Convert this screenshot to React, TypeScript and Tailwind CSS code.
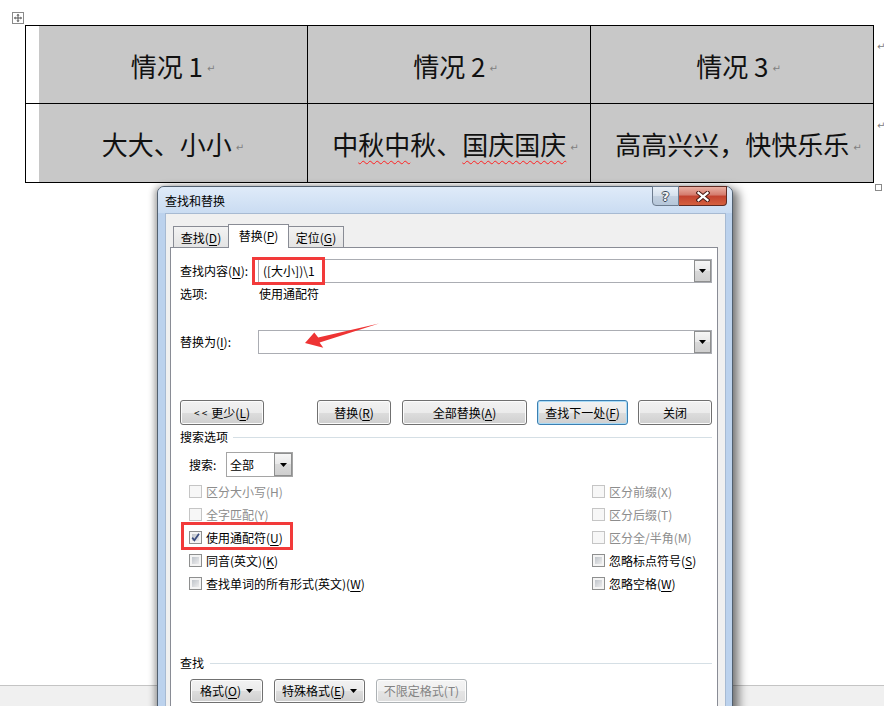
import React from "react";

const CJK = "font-['Noto_Sans_CJK_SC','Noto_Sans',sans-serif]";

function U({ children }: { children: React.ReactNode }) {
  return <span className="underline decoration-1 underline-offset-[2px]">{children}</span>;
}

function Mark() {
  return (
    <span className="ml-[4px] inline-block translate-y-[4px] font-['DejaVu_Sans',sans-serif] text-[10px] leading-none text-[#808080]">
      ↵
    </span>
  );
}

function Tri() {
  return (
    <svg width="7" height="4" viewBox="0 0 7 4">
      <path d="M0 0h7L3.5 4z" fill="#000" />
    </svg>
  );
}

function DropBtn({ className = "" }: { className?: string }) {
  return (
    <div
      className={
        "flex h-full items-center justify-center border border-[#8e8f8f] bg-[linear-gradient(#f6f6f6,#e8e8e8_50%,#d9d9d9_50%,#cfcfcf)] " +
        className
      }
    >
      <Tri />
    </div>
  );
}

function Combo({ value }: { value?: string }) {
  return (
    <div className="flex h-full flex-1 items-center border border-[#abadb3] bg-white pl-[4px]">
      <span className="leading-none">{value}</span>
      <DropBtn className="ml-auto w-[17px]" />
    </div>
  );
}

type BtnProps = { className?: string; children: React.ReactNode; kind?: "n" | "f" | "d" };

function Btn({ className = "", children, kind = "n" }: BtnProps) {
  const k =
    kind === "f"
      ? "border-[#3c7fb1] shadow-[inset_0_0_0_1px_#a9dbf7] text-black"
      : kind === "d"
      ? "border-[#adb2b5] shadow-[inset_0_0_0_1px_#fcfcfc] text-[#838383]"
      : "border-[#707070] shadow-[inset_0_0_0_1px_#fcfcfc] text-black";
  const bg =
    kind === "d"
      ? "bg-[linear-gradient(#f4f4f4,#efefef_50%,#e5e5e5_50%,#dddddd)]"
      : "bg-[linear-gradient(#f2f2f2,#ebebeb_50%,#dddddd_50%,#cfcfcf)]";
  return (
    <div className={`flex h-full items-center justify-center rounded-[3px] border leading-none ${k} ${bg} ${className}`}>
      {children}
    </div>
  );
}

function Box({ disabled, checked }: { disabled?: boolean; checked?: boolean }) {
  if (disabled) return <div className="h-[13px] w-[13px] shrink-0 border border-[#c5c5c5] bg-[#f7f7f7]" />;
  return (
    <div className="relative h-[13px] w-[13px] shrink-0 border border-[#8e8f8f] bg-[#f4f4f4] p-[2px]">
      <div className="h-full w-full bg-[linear-gradient(135deg,#bfc4ca,#ececed)]" />
      {checked && (
        <svg className="absolute left-[0px] top-[0px]" width="11" height="11" viewBox="0 0 11 11">
          <path d="M2.2 5.6 L4.4 8.3 L9 1.8" fill="none" stroke="#3a4c7e" strokeWidth="1.7" />
        </svg>
      )}
    </div>
  );
}

function Check({ children, disabled, checked }: { children: React.ReactNode; disabled?: boolean; checked?: boolean }) {
  return (
    <div className="flex h-[23px] items-center">
      <Box disabled={disabled} checked={checked} />
      <span className={disabled ? "ml-[4px] leading-none text-[#8d8d8d]" : "ml-[4px] leading-none text-black"}>{children}</span>
    </div>
  );
}

function Wavy({ children }: { children: React.ReactNode }) {
  return (
    <span className="underline decoration-wavy decoration-[#ff2020] decoration-1 underline-offset-[5px]">{children}</span>
  );
}

export default function App() {
  return (
    <div className={`relative flex h-[706px] w-[884px] flex-col overflow-hidden bg-white ${CJK}`}>
      {/* table move handle */}
      <svg className="absolute left-[12px] top-[12px]" width="12" height="12" viewBox="0 0 12 12">
        <rect x="0.5" y="0.5" width="11" height="11" fill="#fff" stroke="#8a8a8a" />
        <path d="M6 3v6M3 6h6" stroke="#555" />
        <path d="M6 1.8l-1.6 1.7h3.2zM6 10.2l-1.6-1.7h3.2zM1.8 6l1.7-1.6v3.2zM10.2 6l-1.7-1.6v3.2z" fill="#555" />
      </svg>

      {/* table */}
      <div className="ml-[25px] mt-[25px] grid w-[849px] grid-cols-[281px_282px_282px] grid-rows-[77px_78px] gap-px bg-black p-px text-[26px] text-[#111]">
        <div className="flex bg-white pl-[13px]">
          <div className="flex flex-1 items-center justify-center bg-[#c8c8c8] pt-[1px]">
            情况 1<Mark />
          </div>
        </div>
        <div className="flex items-center justify-center bg-[#c8c8c8] pl-[13px] pt-[1px]">
          情况 2<Mark />
        </div>
        <div className="flex items-center justify-center bg-[#c8c8c8] pl-[13px] pt-[1px]">
          情况 3<Mark />
        </div>
        <div className="flex bg-white pl-[13px]">
          <div className="flex flex-1 items-center justify-center bg-[#c8c8c8] pt-[1px]">
            大大、小小<Mark />
          </div>
        </div>
        <div className="flex items-center justify-center bg-[#c8c8c8] pl-[13px] pt-[1px]">
          <span>
            中<Wavy>秋中</Wavy>秋、<Wavy>国庆国庆</Wavy>
          </span>
          <Mark />
        </div>
        <div className="flex items-center justify-center bg-[#c8c8c8] pl-[13px] pt-[1px]">
          高高兴兴，快快乐乐<Mark />
        </div>
      </div>

      {/* end-of-row marks and resize handle */}
      <span className="absolute left-[877px] top-[42px] font-['DejaVu_Sans',sans-serif] text-[10px] leading-none text-[#808080]">↵</span>
      <span className="absolute left-[877px] top-[121px] font-['DejaVu_Sans',sans-serif] text-[10px] leading-none text-[#808080]">↵</span>
      <div className="absolute left-[875px] top-[184px] h-[7px] w-[7px] border border-[#8a8a8a] bg-white" />

      {/* status bar */}
      <div className="mt-auto h-[21px] border-t border-[#c4c4c4] bg-[#f0f0f0]" />

      {/* dialog */}
      <div className="absolute left-[157px] top-[186px] flex h-[540px] w-[576px] flex-col rounded-t-[7px] border border-[#52606f] bg-[#bcd2ed] text-[12px] text-black shadow-[6px_3px_10px_rgba(0,0,0,0.5),-3px_0_6px_rgba(0,0,0,0.3)]">
        {/* title bar */}
        <div className="flex h-[26px] shrink-0 items-start rounded-t-[6px] bg-[linear-gradient(#dfebf9,#cadcf2)]">
          <span className="ml-[7px] mt-[6px] leading-[16px]">查找和替换</span>
          <div className="-mt-px ml-auto mr-[5px] flex">
            <div className="flex h-[20px] w-[27px] items-center justify-center rounded-bl-[4px] border border-[#6d7c8f] bg-[linear-gradient(#eaf1f9,#d5e0ec_50%,#c3d1e1_50%,#b6c6d9)]">
              <span className="font-['DejaVu_Sans',sans-serif] text-[13px] font-bold leading-none text-[#f4f4f4] [text-shadow:1px_0_0_#3d4a5a,-1px_0_0_#3d4a5a,0_1px_0_#3d4a5a,0_-1px_0_#3d4a5a]">
                ?
              </span>
            </div>
            <div className="flex h-[20px] w-[48px] items-center justify-center rounded-br-[4px] border border-l-0 border-[#5e2a22] bg-[linear-gradient(#eab0a3,#d47a6c_45%,#c2422f_50%,#d5603f)]">
              <svg width="14" height="11" viewBox="0 0 14 11">
                <path d="M2.5 1.8 L11.5 9.2 M11.5 1.8 L2.5 9.2" stroke="#4a1c16" strokeWidth="4.2" strokeLinecap="square" />
                <path d="M2.5 1.8 L11.5 9.2 M11.5 1.8 L2.5 9.2" stroke="#ffffff" strokeWidth="2.2" strokeLinecap="square" />
              </svg>
            </div>
          </div>
        </div>

        {/* body */}
        <div className="ml-[7px] mr-[6px] flex flex-1 flex-col border border-[#a7bad2] bg-[#f0f0f0] pl-[4px] pr-[7px] pt-[10px]">
          {/* tabs */}
          <div className="relative z-10 -mb-px ml-[3px] flex h-[24px] items-end">
            <div className="mb-px flex h-[21px] w-[56px] items-center justify-center border border-b-0 border-[#898c95] bg-[linear-gradient(#f3f3f3,#e4e4e4)] pt-[1px] leading-none">
              查找(<U>D</U>)
            </div>
            <div className="relative z-10 -ml-px flex h-[24px] w-[61px] items-center justify-center border border-b-0 border-[#898c95] bg-white pb-[1px] leading-none">
              替换(<U>P</U>)
            </div>
            <div className="-ml-px mb-px flex h-[21px] w-[56px] items-center justify-center border border-b-0 border-[#898c95] bg-[linear-gradient(#f3f3f3,#e4e4e4)] pt-[1px] leading-none">
              定位(<U>G</U>)
            </div>
          </div>

          {/* panel */}
          <div className="flex flex-1 flex-col border border-[#898c95] bg-white pl-[9px] pr-[5px] pt-[11px]">
            <div className="relative flex h-[24px] items-center">
              <span className="w-[78px] leading-none">
                查找内容(<U>N</U>):
              </span>
              <Combo value={"([大小])\\1"} />
              <div className="absolute left-[72px] top-[-2px] h-[28px] w-[73px] border-[3px] border-[#f23a3a]" />
            </div>
            <div className="flex h-[22px] items-center">
              <span className="w-[79px] leading-none">选项:</span>
              <span className="leading-none">使用通配符</span>
            </div>

            <div className="mt-[25px] flex h-[24px] items-center">
              <span className="w-[78px] leading-none">
                替换为(<U>I</U>):
              </span>
              <Combo />
            </div>

            <div className="mt-[46px] flex h-[25px]">
              <Btn className="w-[84px]">
                <span className="mr-[4px] text-[10px]">&lt; &lt;</span>更少(<U>L</U>)
              </Btn>
              <Btn className="ml-[53px] w-[74px]">
                替换(<U>R</U>)
              </Btn>
              <Btn className="ml-[11px] w-[125px]">
                全部替换(<U>A</U>)
              </Btn>
              <Btn className="ml-[10px] w-[91px]" kind="f">
                查找下一处(<U>F</U>)
              </Btn>
              <Btn className="ml-[10px] w-[74px]">关闭</Btn>
            </div>

            <div className="mt-[3px] flex h-[18px] items-center">
              <span className="leading-none">搜索选项</span>
              <div className="ml-[5px] h-px flex-1 bg-[#d5dfe5]" />
            </div>

            <div className="mt-[6px] flex h-[25px] items-center pl-[9px]">
              <span className="w-[37px] leading-none">搜索:</span>
              <div className="flex h-full w-[67px] items-center border border-[#a5a5a5] bg-white pl-[3px]">
                <span className="leading-none">全部</span>
                <DropBtn className="ml-auto w-[18px]" />
              </div>
            </div>

            <div className="mt-[3px] flex">
              <div className="relative flex w-[412px] flex-col pl-[9px]">
                <Check disabled>区分大小写(H)</Check>
                <Check disabled>全字匹配(Y)</Check>
                <Check checked>
                  使用通配符(<U>U</U>)
                </Check>
                <Check>
                  同音(英文)(<U>K</U>)
                </Check>
                <Check>
                  查找单词的所有形式(英文)(<U>W</U>)
                </Check>
                <div className="absolute left-[1px] top-[42px] h-[28px] w-[112px] border-[3px] border-[#f23a3a]" />
              </div>
              <div className="flex flex-col">
                <Check disabled>区分前缀(X)</Check>
                <Check disabled>区分后缀(T)</Check>
                <Check disabled>区分全/半角(M)</Check>
                <Check>
                  忽略标点符号(<U>S</U>)
                </Check>
                <Check>
                  忽略空格(<U>W</U>)
                </Check>
              </div>
            </div>

            <div className="mt-[59px] flex h-[18px] items-center">
              <span className="leading-none">查找</span>
              <div className="ml-[6px] h-px flex-1 bg-[#d5dfe5]" />
            </div>

            <div className="mt-[7px] flex h-[24px]">
              <Btn className="ml-[10px] w-[73px]">
                格式(<U>O</U>)
                <span className="ml-[5px] inline-flex">
                  <Tri />
                </span>
              </Btn>
              <Btn className="ml-[11px] w-[91px]">
                特殊格式(<U>E</U>)
                <span className="ml-[5px] inline-flex">
                  <Tri />
                </span>
              </Btn>
              <Btn className="ml-[11px] w-[91px]" kind="d">
                不限定格式(T)
              </Btn>
            </div>
          </div>
        </div>
      </div>

      {/* annotation arrow */}
      <svg className="absolute left-[300px] top-[318px]" width="84" height="34" viewBox="0 0 84 34">
        <path d="M5 25 L14.3 14.6 L18.2 19.6 L79 5.6 L19.6 24.4 L23.3 29.7 Z" fill="#ee3434" />
      </svg>
    </div>
  );
}
